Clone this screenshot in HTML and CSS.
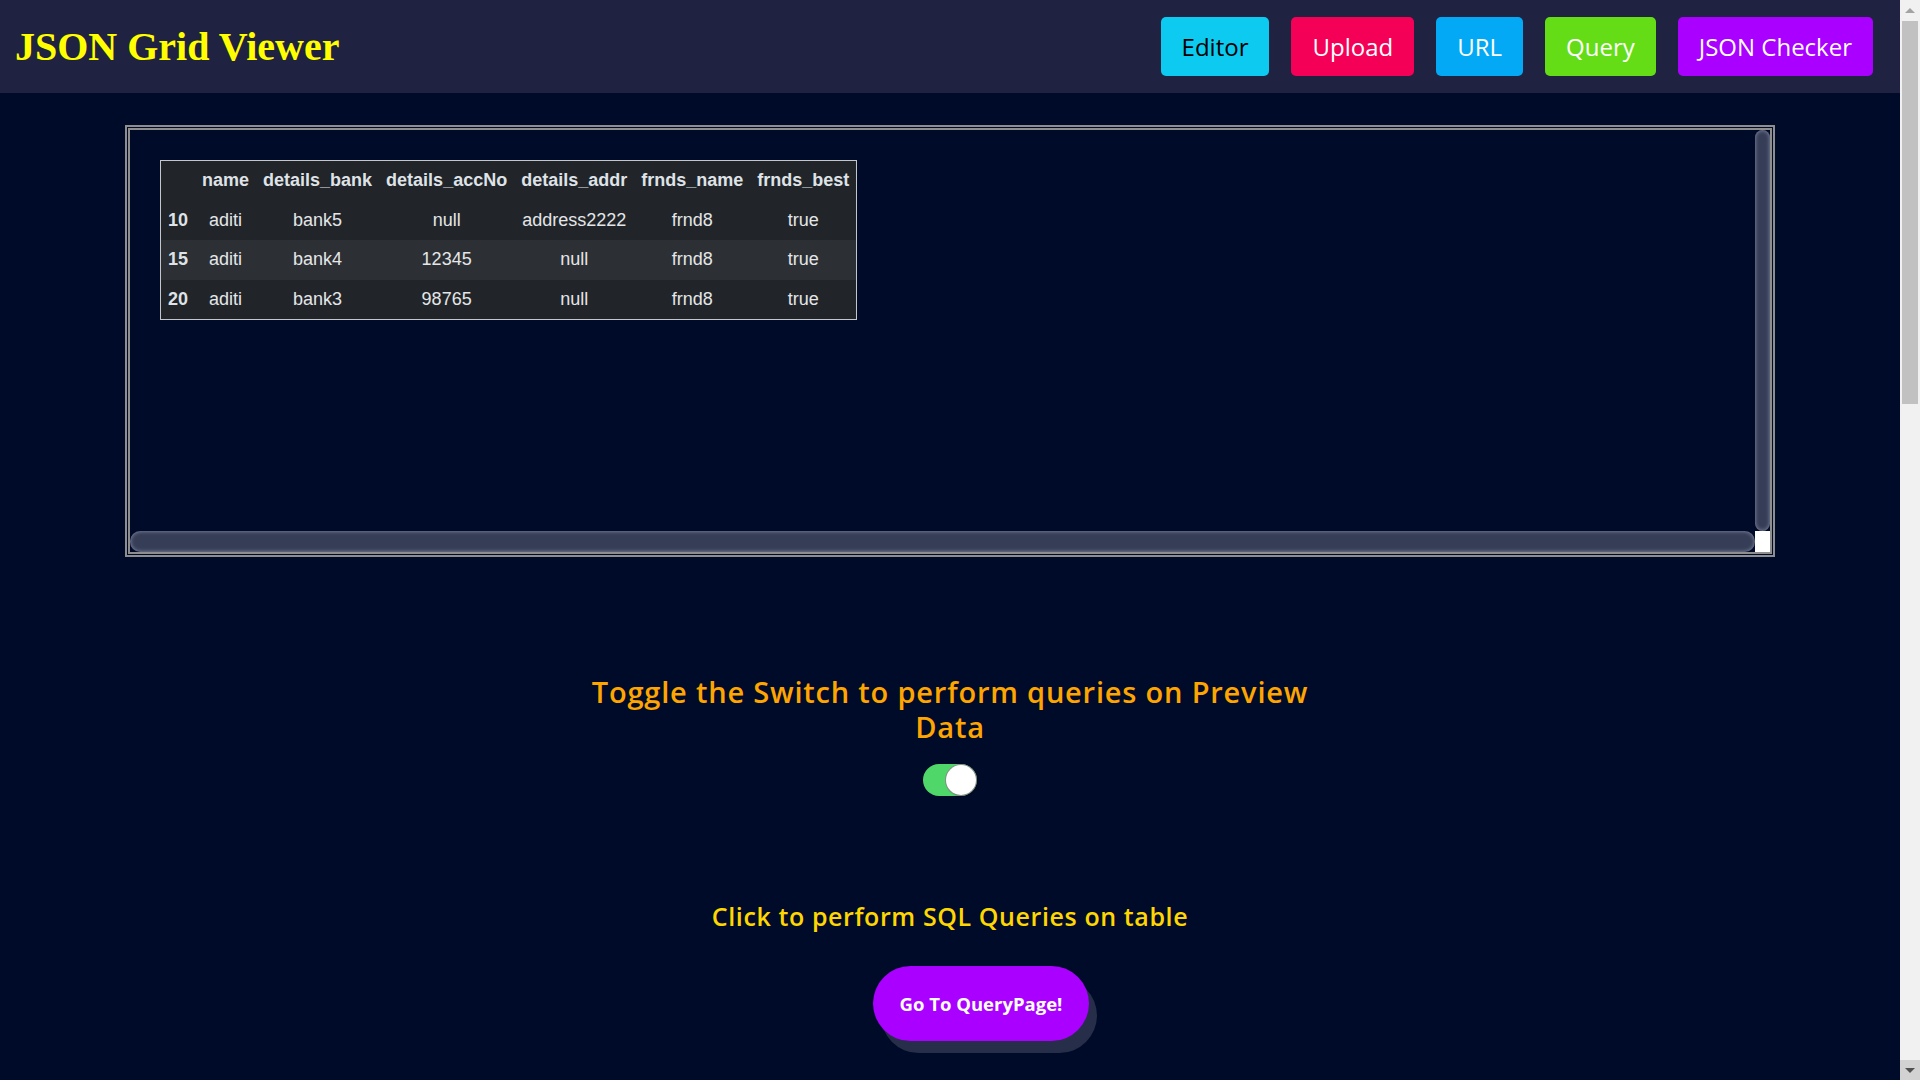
FILE: index.html
```html
<!DOCTYPE html>
<html lang="en">
<head>
<meta charset="utf-8">
<title>JSON Grid Viewer</title>
<link rel="stylesheet" href="styles.css">
</head>
<body>
<header class="topbar">
  <h1 class="brand">JSON Grid Viewer</h1>
  <nav class="nav">
    <button class="nav-btn btn-editor">Editor</button>
    <button class="nav-btn btn-upload">Upload</button>
    <button class="nav-btn btn-url">URL</button>
    <button class="nav-btn btn-query">Query</button>
    <button class="nav-btn btn-checker">JSON Checker</button>
  </nav>
</header>
<main class="main">
  <section class="grid-box">
    <div class="grid-viewport">
      <table class="data-table">
        <thead>
          <tr>
            <th></th>
            <th>name</th>
            <th>details_bank</th>
            <th>details_accNo</th>
            <th>details_addr</th>
            <th>frnds_name</th>
            <th>frnds_best</th>
          </tr>
        </thead>
        <tbody>
          <tr>
            <th>10</th><td>aditi</td><td>bank5</td><td>null</td><td>address2222</td><td>frnd8</td><td>true</td>
          </tr>
          <tr>
            <th>15</th><td>aditi</td><td>bank4</td><td>12345</td><td>null</td><td>frnd8</td><td>true</td>
          </tr>
          <tr>
            <th>20</th><td>aditi</td><td>bank3</td><td>98765</td><td>null</td><td>frnd8</td><td>true</td>
          </tr>
        </tbody>
      </table>
    </div>
    <div class="vbar"><div class="thumb"></div></div>
    <div class="hbar"><div class="thumb"></div></div>
    <div class="corner"></div>
  </section>

  <section class="toggle-section">
    <h2 class="toggle-title">Toggle the Switch to perform queries on Preview Data</h2>
    <label class="switch"><span class="knob"></span></label>
  </section>

  <section class="query-section">
    <h3 class="query-title">Click to perform SQL Queries on table</h3>
    <button class="query-btn">Go To QueryPage!</button>
  </section>
</main>

<div class="page-scrollbar" aria-hidden="true">
  <div class="sb-btn sb-up"><span class="arrow-up"></span></div>
  <div class="sb-track"><div class="sb-thumb"></div></div>
  <div class="sb-btn sb-down"><span class="arrow-down"></span></div>
</div>
</body>
</html>
```

FILE: styles.css
```css
html, body {
  margin: 0;
  padding: 0;
}

body {
  background: #000b29;
  font-family: "Open Sans", "Noto Sans", sans-serif;
  margin-right: 20px;
  padding-bottom: 200px;
}

/* ---------- header ---------- */
.topbar {
  height: 93px;
  background: #202241;
  display: flex;
  align-items: center;
  justify-content: space-between;
  padding: 0 27px 0 15px;
}

.brand {
  margin: 0;
  font-family: "Liberation Serif", "Times New Roman", serif;
  font-weight: bold;
  font-size: 40px;
  color: #ffff00;
}

.nav {
  display: flex;
  gap: 22px;
}

.nav-btn {
  height: 59px;
  padding: 0 21px;
  border: none;
  border-radius: 5px;
  font-family: "Open Sans", "Noto Sans", sans-serif;
  font-size: 24px;
  color: #ffffff;
  cursor: pointer;
}

.btn-editor { background: #0dcaf0; color: #000000; }
.btn-upload { background: #f50057; }
.btn-url { background: #03a9f4; }
.btn-query { background: #64dd17; }
.btn-checker { background: #aa00ff; }

/* ---------- grid box ---------- */
.main {
  display: flex;
  flex-direction: column;
  align-items: center;
}

.grid-box {
  box-sizing: border-box;
  width: 1650px;
  height: 432px;
  margin-top: 32px;
  border: 5px double #8e8e8e;
  display: grid;
  grid-template-columns: 1fr 15px;
  grid-template-rows: 1fr 21px;
}

.grid-viewport {
  padding: 30px;
  overflow: hidden;
}

.vbar,
.hbar {
  display: flex;
}

.thumb {
  flex: 1;
  background: #363d57;
  box-shadow: inset 0 0 4px rgba(150, 155, 178, 0.9);
}

.vbar .thumb { border-radius: 8px; }
.hbar .thumb { border-radius: 11px; }

.corner {
  background: #ffffff;
}

.data-table {
  border-collapse: collapse;
  border: 1px solid #c4c7ca;
  background: #212529;
  color: #e4e6e8;
  font-family: "Liberation Sans", Arial, sans-serif;
  font-size: 18px;
}

.data-table th,
.data-table td {
  padding: 6px 7px;
  line-height: 27.5px;
  text-align: center;
  white-space: nowrap;
}

.data-table th {
  font-weight: bold;
  color: #dfe2e6;
}

.data-table tbody tr:nth-child(even) {
  background: #2c3034;
}

/* ---------- toggle ---------- */
.toggle-section {
  margin-top: 117px;
  display: flex;
  flex-direction: column;
  align-items: center;
}

.toggle-title {
  margin: 0;
  max-width: 760px;
  text-align: center;
  font-size: 29px;
  line-height: 35px;
  font-weight: 600;
  color: #ffa500;
  letter-spacing: 0.8px;
}

.switch {
  margin-top: 20px;
  width: 54px;
  height: 32px;
  border-radius: 16px;
  background: #4fd869;
  display: flex;
  align-items: center;
  justify-content: flex-end;
  cursor: pointer;
}

.knob {
  width: 30px;
  height: 30px;
  border-radius: 50%;
  background: #ffffff;
  box-shadow: 0 0 0 1px rgba(140, 140, 140, 0.9), 1px 1px 2px rgba(0, 0, 0, 0.5);
  margin-right: 1px;
}

/* ---------- query ---------- */
.query-section {
  margin-top: 105px;
  display: flex;
  flex-direction: column;
  align-items: center;
}

.query-title {
  margin: 0;
  font-size: 25px;
  line-height: 31px;
  font-weight: 600;
  color: #ffd700;
  letter-spacing: 0.6px;
}

.query-btn {
  margin-top: 34px;
  margin-left: 62px;
  width: 216px;
  height: 75px;
  border: none;
  border-radius: 38px;
  background: #aa00ff;
  color: #ffffff;
  font-family: "Open Sans", "Noto Sans", sans-serif;
  font-size: 18.5px;
  font-weight: bold;
  box-shadow: 8px 12px 0 #262e4a;
  cursor: pointer;
}

/* ---------- browser scrollbar (drawn) ---------- */
.page-scrollbar {
  position: fixed;
  top: 0;
  right: 0;
  width: 20px;
  height: 100vh;
  background: #f1f1f1;
  display: flex;
  flex-direction: column;
}

.sb-btn {
  height: 20px;
  display: flex;
  align-items: center;
  justify-content: center;
}

.sb-down {
  background: #d2d2d2;
}

.arrow-up,
.arrow-down {
  width: 0;
  height: 0;
  border-left: 5px solid transparent;
  border-right: 5px solid transparent;
}

.arrow-up {
  border-bottom: 5px solid #a3a3a3;
}

.arrow-down {
  border-top: 5px solid #505050;
}

.sb-track {
  flex: 1;
  padding: 1px 2px 0;
}

.sb-thumb {
  height: 383px;
  background: #c1c1c1;
}
```
